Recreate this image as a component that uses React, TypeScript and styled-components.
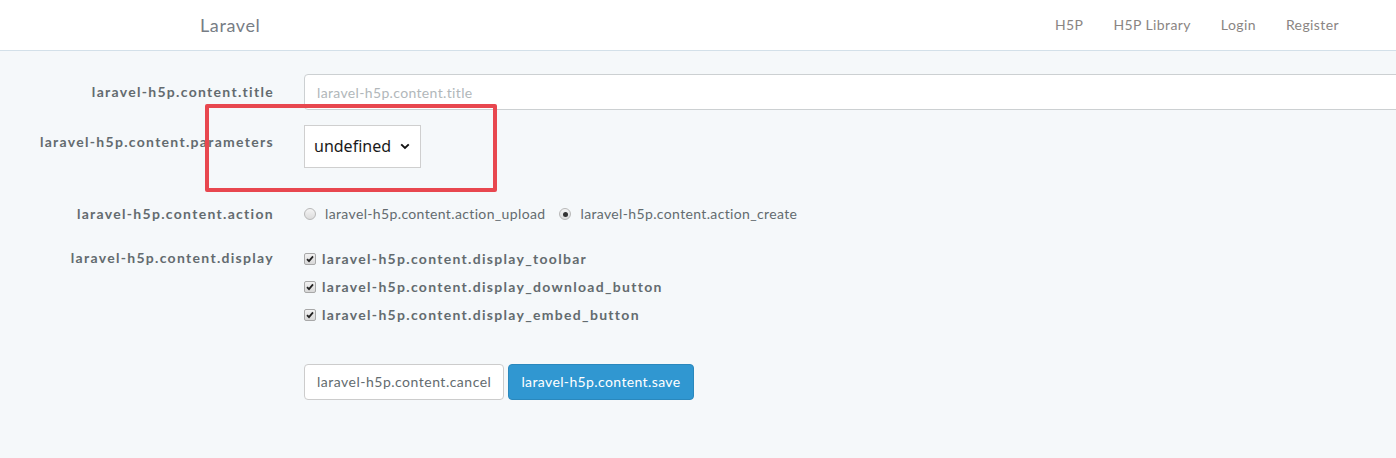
import React from "react";
import styled, { createGlobalStyle } from "styled-components";

const Global = createGlobalStyle`
  html, body { margin: 0; padding: 0; overflow: hidden; }
  body {
    background: #f5f8fa;
    font-family: Lato, "Liberation Sans", sans-serif;
    font-size: 14px;
    line-height: 1.6;
    color: #636b6f;
  }
`;

const Page = styled.div`
  position: relative;
  width: 1396px;
  height: 458px;
  overflow: hidden;
`;

const Navbar = styled.nav`
  height: 51px;
  box-sizing: border-box;
  background: #fff;
  border-bottom: 1px solid #d3e0e9;
  display: flex;
  align-items: center;
  justify-content: space-between;
  padding: 0 42px 0 200px;
`;

const Brand = styled.a`
  font-size: 18px;
  color: #777d85;
  letter-spacing: 0.6px;
  text-decoration: none;
`;

const NavLinks = styled.ul`
  display: flex;
  list-style: none;
  margin: 0;
  padding: 0;
`;

const NavLink = styled.li`
  padding: 0 15px;
  color: #8a8583;
  font-size: 14px;
  letter-spacing: 0.4px;
`;

const Form = styled.form`
  padding-top: 23px;
`;

const Row = styled.div<{ $mt?: number; $center?: boolean }>`
  display: grid;
  grid-template-columns: 274px 1fr;
  column-gap: 30px;
  margin-top: ${(p) => p.$mt ?? 0}px;
  align-items: ${(p) => (p.$center ? "center" : "start")};
`;

const Label = styled.label<{ $pt?: number }>`
  text-align: right;
  font-weight: 700;
  color: #636b6f;
  padding-top: ${(p) => p.$pt ?? 0}px;
  letter-spacing: 1.3px;
  white-space: nowrap;
`;

const InputClip = styled.div`
  min-width: 0;
`;

const TextInput = styled.input`
  width: 1200px;
  height: 36px;
  box-sizing: border-box;
  padding: 6px 12px;
  border: 1px solid #ccd0d2;
  border-radius: 4px;
  background: #fff;
  font-family: inherit;
  font-size: 14px;
  letter-spacing: 0.35px;
  color: #555;
  &::placeholder { color: #b1b7ba; }
`;

const SelectBox = styled.div`
  display: inline-flex;
  align-items: center;
  gap: 9px;
  width: 117px;
  height: 43px;
  box-sizing: border-box;
  padding: 0 10px 0 9px;
  border: 1px solid #cfcfcf;
  background: #fff;
  font-family: "Noto Sans", "Open Sans", sans-serif;
  font-size: 16px;
  color: #1a1a1a;
`;

const Options = styled.div<{ $column?: boolean }>`
  display: flex;
  flex-direction: ${(p) => (p.$column ? "column" : "row")};
  gap: ${(p) => (p.$column ? "6px" : "14px")};
  padding-top: ${(p) => (p.$column ? "1px" : "0")};
`;

const Option = styled.label<{ $bold?: boolean }>`
  display: flex;
  align-items: center;
  gap: ${(p) => (p.$bold ? "6px" : "9px")};
  height: 22px;
  font-weight: ${(p) => (p.$bold ? 700 : 400)};
  letter-spacing: ${(p) => (p.$bold ? "1.3px" : "0.36px")};
  color: #636b6f;
  white-space: nowrap;
`;

const Radio = styled.span<{ $checked?: boolean }>`
  position: relative;
  width: 12px;
  height: 12px;
  box-sizing: border-box;
  border-radius: 50%;
  border: 1px solid #b8b8b8;
  background: linear-gradient(#f4f4f4, #dcdcdc);
  &::after {
    content: "";
    display: ${(p) => (p.$checked ? "block" : "none")};
    position: absolute;
    left: 2.5px;
    top: 2.5px;
    width: 5px;
    height: 5px;
    border-radius: 50%;
    background: #333;
  }
`;

const Check = styled.span`
  display: inline-flex;
  align-items: center;
  justify-content: center;
  width: 12px;
  height: 12px;
  box-sizing: border-box;
  border: 1px solid #a8a8a8;
  border-radius: 2px;
  background: linear-gradient(#f2f2f2, #d8d8d8);
`;

const Buttons = styled.div`
  display: flex;
  gap: 4px;
`;

const Button = styled.button<{ $primary?: boolean }>`
  height: 36px;
  box-sizing: border-box;
  padding: 6px 12px;
  border-radius: 4px;
  border: 1px solid ${(p) => (p.$primary ? "#2a88bd" : "#ccc")};
  background: ${(p) => (p.$primary ? "#3097d1" : "#fff")};
  color: ${(p) => (p.$primary ? "#fff" : "#636b6f")};
  font-family: inherit;
  font-size: 14px;
  letter-spacing: ${(p) => (p.$primary ? "0.38px" : "0.5px")};
  line-height: 1.6;
`;

const Highlight = styled.div`
  position: absolute;
  left: 205px;
  top: 104px;
  width: 292px;
  height: 88px;
  box-sizing: border-box;
  border: 4px solid #e8474f;
  border-radius: 2px;
  pointer-events: none;
`;

const CheckMark = () => (
  <svg width="8" height="8" viewBox="0 0 8 8">
    <path d="M1 4.2 L3 6.2 L7 1.4" fill="none" stroke="#222" strokeWidth="1.8" />
  </svg>
);

const Chevron = () => (
  <svg width="10" height="7" viewBox="0 0 10 7">
    <path d="M1.2 1.3 L5 5 L8.8 1.3" fill="none" stroke="#111" strokeWidth="1.9" />
  </svg>
);

export default function App() {
  const displays = [
    "laravel-h5p.content.display_toolbar",
    "laravel-h5p.content.display_download_button",
    "laravel-h5p.content.display_embed_button",
  ];
  return (
    <Page>
      <Global />
      <Navbar>
        <Brand>Laravel</Brand>
        <NavLinks>
          <NavLink>H5P</NavLink>
          <NavLink>H5P Library</NavLink>
          <NavLink>Login</NavLink>
          <NavLink>Register</NavLink>
        </NavLinks>
      </Navbar>
      <Form>
        <Row>
          <Label $pt={7}>laravel-h5p.content.title</Label>
          <InputClip>
            <TextInput placeholder="laravel-h5p.content.title" />
          </InputClip>
        </Row>
        <Row $mt={15}>
          <Label $pt={6}>laravel-h5p.content.parameters</Label>
          <div>
            <SelectBox>
              <span>undefined</span>
              <Chevron />
            </SelectBox>
          </div>
        </Row>
        <Row $mt={35} $center>
          <Label>laravel-h5p.content.action</Label>
          <Options>
            <Option>
              <Radio />
              laravel-h5p.content.action_upload
            </Option>
            <Option>
              <Radio $checked />
              laravel-h5p.content.action_create
            </Option>
          </Options>
        </Row>
        <Row $mt={22}>
          <Label>laravel-h5p.content.display</Label>
          <Options $column>
            {displays.map((d) => (
              <Option $bold key={d}>
                <Check>
                  <CheckMark />
                </Check>
                {d}
              </Option>
            ))}
          </Options>
        </Row>
        <Row $mt={38}>
          <span />
          <Buttons>
            <Button type="button">laravel-h5p.content.cancel</Button>
            <Button type="button" $primary>
              laravel-h5p.content.save
            </Button>
          </Buttons>
        </Row>
      </Form>
      <Highlight />
    </Page>
  );
}
